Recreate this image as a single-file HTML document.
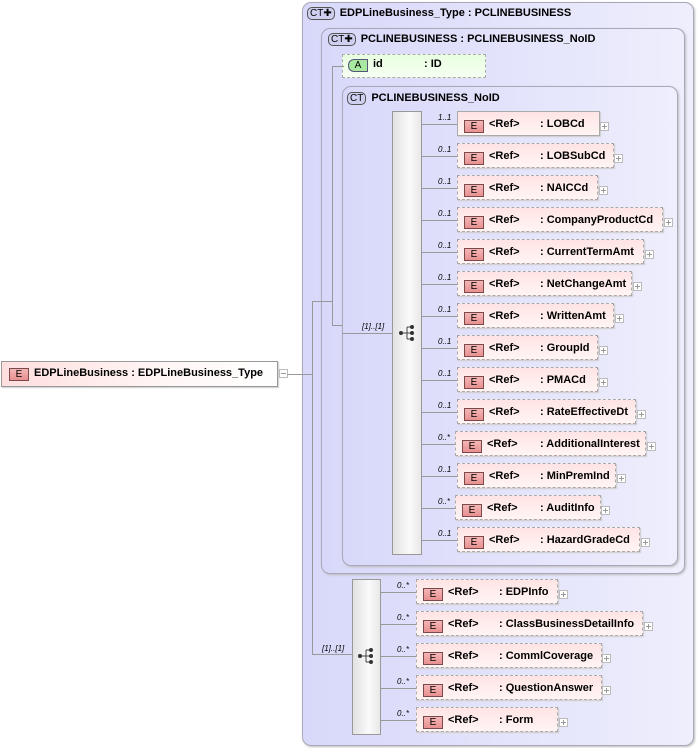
<!DOCTYPE html>
<html><head><meta charset="utf-8"><style>
*{margin:0;padding:0;box-sizing:border-box}
body{width:697px;height:748px;background:#fff;position:relative;overflow:hidden;font-family:"Liberation Sans",Arial,sans-serif;font-size:11px;color:#000}
.a{position:absolute}
.box{position:absolute;border:1px solid #a8a8b8;border-radius:9px;background:linear-gradient(to right,#d8d8fa,#eeeefd);box-shadow:1px 1px 2px #bbb}
.hdr{position:absolute;font-weight:bold;font-size:11px;white-space:nowrap}
.ct{display:inline-block;border:1px solid #555;border-radius:5px;background:#cfd0f0;font-size:10px;padding:0 2px;line-height:11px;margin-right:5px;font-weight:normal}
.el{position:absolute;height:25px;border:1px dashed #aaa;background:linear-gradient(to bottom,#ffe4e4,#fff4f4);box-shadow:1px 1px 1px #ccc;white-space:nowrap}
.el.s{border:1px solid #aaa}
.eb{position:absolute;left:6px;top:8px;width:20px;height:13px;border:1px solid #7a4a4a;background:linear-gradient(#f5b5b5,#e89090);font-size:10px;text-align:center;line-height:11px}
.ref{position:absolute;left:31px;top:6px;font-weight:bold}
.nm{position:absolute;top:6px;font-weight:bold}
.pl{position:absolute;width:9px;height:9px;border:1px solid #bbb;background:#fff}
.pl:before{content:"";position:absolute;left:1px;top:3px;width:5px;height:1px;background:#999}
.pl.p:after{content:"";position:absolute;left:3px;top:1px;width:1px;height:5px;background:#999}
.h{position:absolute;height:1px;background:#999}
.v{position:absolute;width:1px;background:#999}
.card{position:absolute;font-style:italic;font-size:8px;color:#000}
.seq{position:absolute;border:1px solid #999;background:linear-gradient(to right,#e2e2e2,#fafafa 60%,#e8e8e8)}
</style></head><body>

<div class="el s" style="left:1px;top:361px;width:277px;height:26px;border-color:#999;background:linear-gradient(to right,#ffdede,#fff6f6 60%,#fff)">
 <div class="eb" style="left:7px;top:6px">E</div>
 <div class="nm" style="left:32px;top:5px">EDPLineBusiness : EDPLineBusiness_Type</div>
</div>
<div class="pl" style="left:279px;top:369px"></div>

<div class="box" style="left:302px;top:2px;width:392px;height:744px"></div>
<div class="hdr" style="left:307px;top:7px"><span class="ct">CT✚</span>EDPLineBusiness_Type : PCLINEBUSINESS</div>
<div class="box" style="left:321px;top:28px;width:364px;height:546px"></div>
<div class="hdr" style="left:328px;top:33px"><span class="ct">CT✚</span>PCLINEBUSINESS : PCLINEBUSINESS_NoID</div>

<div class="a" style="left:342px;top:54px;width:144px;height:24px;border:1px dashed #aaa;background:linear-gradient(#e8ffe0,#f6fff2)"></div>
<div class="a" style="left:348px;top:59px;width:20px;height:13px;border:1px solid #557;border-radius:6px 0 0 6px;background:#a8e8a0;font-size:10px;text-align:center;line-height:11px">A</div>
<div class="a" style="left:373px;top:58px;font-weight:bold">id</div>
<div class="a" style="left:424px;top:58px;font-weight:bold">: ID</div>

<div class="box" style="left:342px;top:86px;width:336px;height:480px"></div>
<div class="hdr" style="left:347px;top:92px"><span class="ct">CT</span>PCLINEBUSINESS_NoID</div>

<div class="h" style="left:287px;top:374px;width:26px"></div>
<div class="v" style="left:312px;top:301px;height:354px"></div>
<div class="h" style="left:312px;top:301px;width:21px"></div>
<div class="v" style="left:332px;top:66px;height:260px"></div>
<div class="h" style="left:332px;top:66px;width:12px"></div>
<div class="h" style="left:332px;top:325px;width:11px"></div>
<div class="h" style="left:342px;top:333px;width:50px"></div>
<div class="card" style="left:362px;top:322px">[1]..[1]</div>
<div class="h" style="left:312px;top:654px;width:40px"></div>
<div class="card" style="left:322px;top:644px">[1]..[1]</div>

<div class="seq" style="left:392px;top:111px;width:30px;height:444px"></div>
<svg class="a" style="left:398px;top:324px" width="20" height="18"><path d="M3 9H9M9 3V15M9 3H14M9 9H14M9 15H14" stroke="#444" fill="none"/><circle cx="3" cy="9" r="2" fill="#333"/><circle cx="14" cy="3" r="2" fill="#333"/><circle cx="14" cy="9" r="2" fill="#333"/><circle cx="14" cy="15" r="2" fill="#333"/></svg>

<div class="seq" style="left:352px;top:579px;width:29px;height:156px"></div>
<svg class="a" style="left:357px;top:647px" width="20" height="18"><path d="M3 9H9M9 3V15M9 3H14M9 9H14M9 15H14" stroke="#444" fill="none"/><circle cx="3" cy="9" r="2" fill="#333"/><circle cx="14" cy="3" r="2" fill="#333"/><circle cx="14" cy="9" r="2" fill="#333"/><circle cx="14" cy="15" r="2" fill="#333"/></svg>

<div class="h" style="left:422px;top:124px;width:35px"></div><div class="card" style="left:438px;top:113px">1..1</div>
<div class="el s" style="left:457px;top:111px;width:143px"><div class="eb">E</div><div class="ref">&lt;Ref&gt;</div><div class="nm" style="left:82px">: LOBCd</div></div><div class="pl p" style="left:600px;top:122px"></div>

<div class="h" style="left:422px;top:156px;width:35px"></div><div class="card" style="left:438px;top:145px">0..1</div>
<div class="el" style="left:457px;top:143px;width:157px"><div class="eb">E</div><div class="ref">&lt;Ref&gt;</div><div class="nm" style="left:82px">: LOBSubCd</div></div><div class="pl p" style="left:614px;top:154px"></div>

<div class="h" style="left:422px;top:188px;width:35px"></div><div class="card" style="left:438px;top:177px">0..1</div>
<div class="el" style="left:457px;top:175px;width:141px"><div class="eb">E</div><div class="ref">&lt;Ref&gt;</div><div class="nm" style="left:82px">: NAICCd</div></div><div class="pl p" style="left:599px;top:186px"></div>

<div class="h" style="left:422px;top:220px;width:35px"></div><div class="card" style="left:438px;top:209px">0..1</div>
<div class="el" style="left:457px;top:207px;width:206px"><div class="eb">E</div><div class="ref">&lt;Ref&gt;</div><div class="nm" style="left:82px">: CompanyProductCd</div></div><div class="pl p" style="left:664px;top:218px"></div>

<div class="h" style="left:422px;top:252px;width:35px"></div><div class="card" style="left:438px;top:241px">0..1</div>
<div class="el" style="left:457px;top:239px;width:187px"><div class="eb">E</div><div class="ref">&lt;Ref&gt;</div><div class="nm" style="left:82px">: CurrentTermAmt</div></div><div class="pl p" style="left:645px;top:250px"></div>

<div class="h" style="left:422px;top:284px;width:35px"></div><div class="card" style="left:438px;top:273px">0..1</div>
<div class="el" style="left:457px;top:271px;width:175px"><div class="eb">E</div><div class="ref">&lt;Ref&gt;</div><div class="nm" style="left:82px">: NetChangeAmt</div></div><div class="pl p" style="left:633px;top:282px"></div>

<div class="h" style="left:422px;top:316px;width:35px"></div><div class="card" style="left:438px;top:305px">0..1</div>
<div class="el" style="left:457px;top:303px;width:157px"><div class="eb">E</div><div class="ref">&lt;Ref&gt;</div><div class="nm" style="left:82px">: WrittenAmt</div></div><div class="pl p" style="left:615px;top:314px"></div>

<div class="h" style="left:422px;top:348px;width:35px"></div><div class="card" style="left:438px;top:337px">0..1</div>
<div class="el" style="left:457px;top:335px;width:141px"><div class="eb">E</div><div class="ref">&lt;Ref&gt;</div><div class="nm" style="left:82px">: GroupId</div></div><div class="pl p" style="left:599px;top:346px"></div>

<div class="h" style="left:422px;top:380px;width:35px"></div><div class="card" style="left:438px;top:369px">0..1</div>
<div class="el" style="left:457px;top:367px;width:141px"><div class="eb">E</div><div class="ref">&lt;Ref&gt;</div><div class="nm" style="left:82px">: PMACd</div></div><div class="pl p" style="left:599px;top:378px"></div>

<div class="h" style="left:422px;top:412px;width:35px"></div><div class="card" style="left:438px;top:401px">0..1</div>
<div class="el" style="left:457px;top:399px;width:179px"><div class="eb">E</div><div class="ref">&lt;Ref&gt;</div><div class="nm" style="left:82px">: RateEffectiveDt</div></div><div class="pl p" style="left:637px;top:410px"></div>

<div class="h" style="left:422px;top:444px;width:33px"></div><div class="card" style="left:438px;top:433px">0..*</div>
<div class="el" style="left:455px;top:431px;width:191px"><div class="eb">E</div><div class="ref">&lt;Ref&gt;</div><div class="nm" style="left:84px">: AdditionalInterest</div></div><div class="pl p" style="left:647px;top:442px"></div>

<div class="h" style="left:422px;top:476px;width:35px"></div><div class="card" style="left:438px;top:465px">0..1</div>
<div class="el" style="left:457px;top:463px;width:159px"><div class="eb">E</div><div class="ref">&lt;Ref&gt;</div><div class="nm" style="left:82px">: MinPremInd</div></div><div class="pl p" style="left:617px;top:474px"></div>

<div class="h" style="left:422px;top:508px;width:33px"></div><div class="card" style="left:438px;top:497px">0..*</div>
<div class="el" style="left:455px;top:495px;width:146px"><div class="eb">E</div><div class="ref">&lt;Ref&gt;</div><div class="nm" style="left:84px">: AuditInfo</div></div><div class="pl p" style="left:601px;top:506px"></div>

<div class="h" style="left:422px;top:540px;width:35px"></div><div class="card" style="left:438px;top:529px">0..1</div>
<div class="el" style="left:457px;top:527px;width:183px"><div class="eb">E</div><div class="ref">&lt;Ref&gt;</div><div class="nm" style="left:82px">: HazardGradeCd</div></div><div class="pl p" style="left:641px;top:538px"></div>

<div class="h" style="left:381px;top:592px;width:35px"></div><div class="card" style="left:397px;top:581px">0..*</div>
<div class="el" style="left:416px;top:579px;width:142px"><div class="eb">E</div><div class="ref">&lt;Ref&gt;</div><div class="nm" style="left:82px">: EDPInfo</div></div><div class="pl p" style="left:559px;top:590px"></div>

<div class="h" style="left:381px;top:624px;width:35px"></div><div class="card" style="left:397px;top:613px">0..*</div>
<div class="el" style="left:416px;top:611px;width:227px"><div class="eb">E</div><div class="ref">&lt;Ref&gt;</div><div class="nm" style="left:82px">: ClassBusinessDetailInfo</div></div><div class="pl p" style="left:644px;top:622px"></div>

<div class="h" style="left:381px;top:656px;width:35px"></div><div class="card" style="left:397px;top:645px">0..*</div>
<div class="el" style="left:416px;top:643px;width:186px"><div class="eb">E</div><div class="ref">&lt;Ref&gt;</div><div class="nm" style="left:82px">: CommlCoverage</div></div><div class="pl p" style="left:602px;top:654px"></div>

<div class="h" style="left:381px;top:688px;width:35px"></div><div class="card" style="left:397px;top:677px">0..*</div>
<div class="el" style="left:416px;top:675px;width:186px"><div class="eb">E</div><div class="ref">&lt;Ref&gt;</div><div class="nm" style="left:82px">: QuestionAnswer</div></div><div class="pl p" style="left:602px;top:686px"></div>

<div class="h" style="left:381px;top:720px;width:35px"></div><div class="card" style="left:397px;top:709px">0..*</div>
<div class="el" style="left:416px;top:707px;width:142px"><div class="eb">E</div><div class="ref">&lt;Ref&gt;</div><div class="nm" style="left:82px">: Form</div></div><div class="pl p" style="left:559px;top:718px"></div>

</body></html>
